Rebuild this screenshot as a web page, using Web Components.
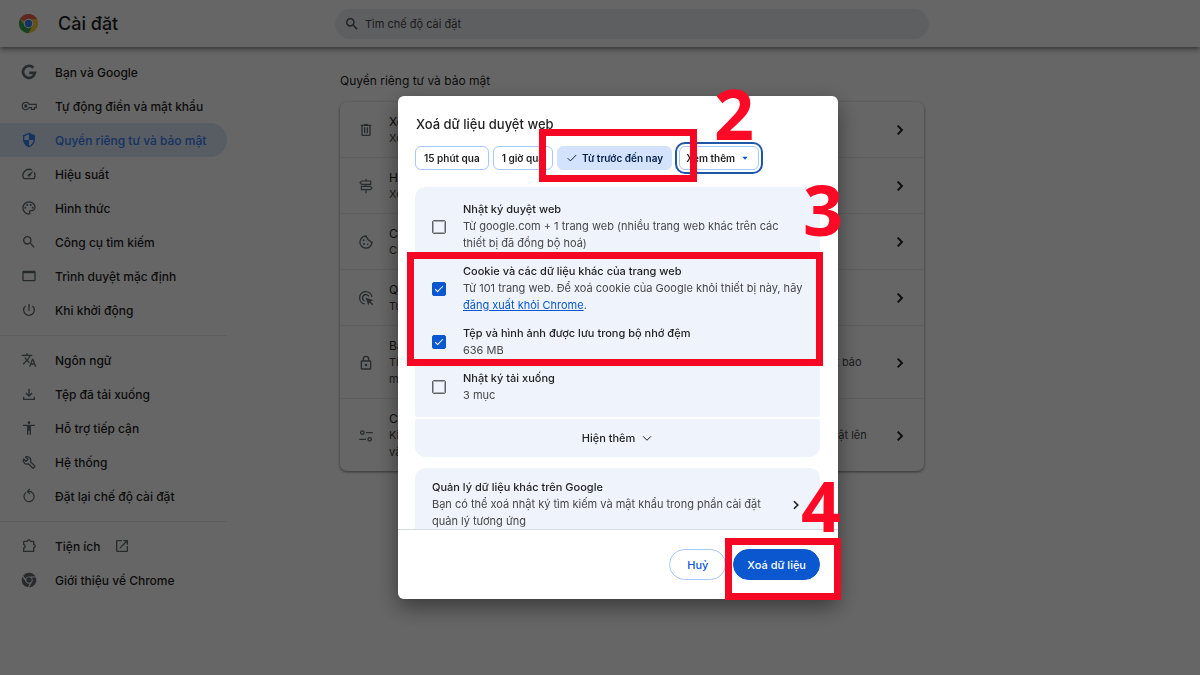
<!DOCTYPE html>
<html lang="vi">
<head>
  <meta charset="utf-8">
  <meta name="viewport" content="width=device-width, initial-scale=1">
  <title>Cài đặt</title>
  <style>
    body {
      margin: 0;
      min-height: 100vh;
      background: #fff;
      color: #1f1f1f;
      font-family: "Inter", "Noto Sans", sans-serif;
      font-size: 12px;
    }
  </style>
</head>
<body>
  <settings-app></settings-app>

  <script>
    // 24x24 icon shapes, drawn in the current colour
    const S = 'fill="none" stroke="currentColor"';
    const ICONS = {
      google: `<path ${S} stroke-width="4" d="M18.6 5.6A9 9 0 1 0 20.9 13.2H12.4"/>`,
      key: `<g ${S} stroke-width="1.8"><path d="M12.4 9.6A5.6 5.6 0 1 0 12.4 14.4H15.6V17.2H20.2V14.4H22.8V9.6Z"/></g><circle cx="7.2" cy="12" r="2.5"/>`,
      shield: `<path d="M12 1 3 5v6c0 5.55 3.84 10.74 9 12 5.16-1.26 9-6.45 9-12V5l-9-4zm0 10.99h7c-.53 4.12-3.28 7.79-7 8.94V12H5V6.3l7-3.11v8.8z"/>`,
      speed: `<path d="m20.38 8.57-1.23 1.85a8 8 0 0 1-.22 7.58H5.07A8 8 0 0 1 15.58 6.85l1.85-1.23A10 10 0 0 0 3.35 19a2 2 0 0 0 1.72 1h13.85a2 2 0 0 0 1.74-1 10 10 0 0 0-.27-10.44zm-9.79 6.84a2 2 0 0 0 2.83 0l5.66-8.49-8.49 5.66a2 2 0 0 0 0 2.83z"/>`,
      palette: `<path d="M12 22C6.49 22 2 17.51 2 12S6.49 2 12 2s10 4.04 10 9c0 3.31-2.69 6-6 6h-1.77c-.28 0-.5.22-.5.5 0 .12.05.23.13.33.41.47.64 1.06.64 1.67A2.5 2.5 0 0 1 12 22zm0-18c-4.41 0-8 3.59-8 8s3.59 8 8 8c.28 0 .5-.22.5-.5a.54.54 0 0 0-.14-.35c-.41-.46-.63-1.05-.63-1.65a2.5 2.5 0 0 1 2.5-2.5H16c2.21 0 4-1.79 4-4 0-3.86-3.59-7-8-7z"/><circle cx="6.5" cy="11.5" r="1.5"/><circle cx="9.5" cy="7.5" r="1.5"/><circle cx="14.5" cy="7.5" r="1.5"/><circle cx="17.5" cy="11.5" r="1.5"/>`,
      search: `<path d="M15.5 14h-.79l-.28-.27A6.47 6.47 0 0 0 16 9.5 6.5 6.5 0 1 0 9.5 16c1.61 0 3.09-.59 4.23-1.57l.27.28v.79l5 4.99L20.49 19l-4.99-5zm-6 0C7.01 14 5 11.99 5 9.5S7.01 5 9.5 5 14 7.01 14 9.5 11.99 14 9.5 14z"/>`,
      browser: `<path d="M20 4H4c-1.1 0-2 .9-2 2v12c0 1.1.9 2 2 2h16c1.1 0 2-.9 2-2V6c0-1.1-.9-2-2-2zm0 14H4V8h16v10z"/>`,
      power: `<path d="M13 3h-2v10h2V3zm4.83 2.17-1.42 1.42A6.92 6.92 0 0 1 19 12c0 3.87-3.13 7-7 7A6.995 6.995 0 0 1 7.58 6.58L6.17 5.17A8.932 8.932 0 0 0 3 12a9 9 0 0 0 18 0c0-2.74-1.23-5.18-3.17-6.83z"/>`,
      translate: `<path d="m12.87 15.07-2.54-2.51.03-.03A17.52 17.52 0 0 0 14.07 6H17V4h-7V2H8v2H1v1.99h11.17C11.5 7.92 10.44 9.75 9 11.35 8.07 10.32 7.3 9.19 6.69 8h-2c.73 1.63 1.73 3.17 2.98 4.56l-5.09 5.02L4 19l5-5 3.11 3.11.76-2.04zM18.5 10h-2L12 22h2l1.12-3h4.75L21 22h2l-4.5-12zm-2.62 7 1.62-4.33L19.12 17h-3.24z"/>`,
      download: `<path ${S} d="M12 4v11M7.4 10.6l4.6 4.6 4.6-4.6M4 16v4h16v-4"/>`,
      accessibility: `<path d="M12 2c1.1 0 2 .9 2 2s-.9 2-2 2-2-.9-2-2 .9-2 2-2zm9 7h-6v13h-2v-6h-2v6H9V9H3V7h18v2z"/>`,
      wrench: `<path ${S} stroke-linejoin="round" d="M9.4 3.9a5.5 5.5 0 0 1 4.9 7.6l6.3 6.3a1 1 0 0 1 0 1.4l-1.8 1.8a1 1 0 0 1-1.4 0l-6.3-6.3a5.5 5.5 0 0 1-7.2-7.3l3.6 3.6 3-3-3.6-3.6a5 5 0 0 1 2.5-.5z"/>`,
      reset: `<path ${S} stroke-width="1.8" d="M11 5.2h1A7.6 7.6 0 1 1 7.5 6.7M13.2 1.5 9.6 5.2l3.6 3.6"/>`,
      extension: `<path ${S} stroke-linejoin="round" d="M5 5h4.5a2.3 2.3 0 0 1 4.6 0H19v5a2.3 2.3 0 0 1 0 4.6V20H4v-4.6a3 3 0 0 0 0-5.8V6a1 1 0 0 1 1-1z"/>`,
      chromeMono: `<circle cx="12" cy="12" r="4"/><path fill-rule="evenodd" d="M12 1a11 11 0 0 1 9.6 5.6H12A5.5 5.5 0 0 0 6.8 10.3L3.2 5.5A11 11 0 0 1 12 1zM2.2 7.2A11 11 0 0 0 10.3 22.9l3.1-5.6A5.5 5.5 0 0 1 7.1 14.5zM22.3 8.2A11 11 0 0 1 12 23l4.6-8a5.5 5.5 0 0 0-.8-6.8z"/>`,
      external: `<path d="M19 19H5V5h7V3H5a2 2 0 0 0-2 2v14a2 2 0 0 0 2 2h14c1.1 0 2-.9 2-2v-7h-2v7zM14 3v2h3.59l-9.83 9.83 1.41 1.41L19 6.41V10h2V3h-7z"/>`,
      trash: `<path d="M15 4V3H9v1H4v2h1v13c0 1.1.9 2 2 2h10c1.1 0 2-.9 2-2V6h1V4h-5zm2 15H7V6h10v13zM9 8h2v9H9zm4 0h2v9h-2z"/>`,
      signpost: `<path ${S} stroke-width="1.8" d="M12 1.5v3M12 9.5v3M12 17.5V23M5.5 4.5H19v5H5.5L3 7zM18.5 12.5H5v5h13.5L21 15z"/>`,
      cookie: `<path ${S} d="M12.2 3a9.1 9.1 0 1 0 8.8 9.3c-2 .2-3.2-1-3.2-2.7-2.4.2-3.7-1.2-3.3-3.3C12.8 6 12 4.8 12.2 3z"/><circle cx="8.5" cy="9.5" r="1.5"/><circle cx="9" cy="15" r="1.5"/><circle cx="14.5" cy="15.5" r="1.2"/>`,
      adsClick: `<path ${S} d="M10 20.8A9.3 9.3 0 1 1 20.9 10.2M9.5 16.2a5 5 0 1 1 6.8-6.7"/><path d="m11.5 11.5 11.5 4-4.3 1.8 4.2 4.2-1.5 1.5-4.2-4.2-1.7 4.2z"/>`,
      lock: `<path d="M18 8h-1V6A5 5 0 0 0 7 6v2H6a2 2 0 0 0-2 2v10c0 1.1.9 2 2 2h12a2 2 0 0 0 2-2V10a2 2 0 0 0-2-2zM9 6a3 3 0 0 1 6 0v2H9V6zm9 14H6V10h12v10zm-6-3a2 2 0 1 0 0-4 2 2 0 0 0 0 4z"/>`,
      tune: `<g ${S}><circle cx="6.5" cy="7" r="2.6"/><path d="M12 7h10M2 17h10"/><circle cx="17.5" cy="17" r="2.6"/></g>`,
      chevronRight: `<path ${S} stroke-width="2.8" d="m8.5 5.5 6.5 6.5-6.5 6.5"/>`,
      chevronDown: `<path ${S} d="m4 8.5 8 8 8-8"/>`,
      check: `<path ${S} d="m3.5 12.5 5.3 5.3L20.5 6"/>`,
      arrowDrop: `<path d="m4 8 8 9 8-9z"/>`,
      chrome: `
        <circle cx="12" cy="12" r="11" fill="#fbc73c"/>
        <path fill="#f06050" d="M12 12 2.5 6.5a11 11 0 0 1 19 0V7H12z"/>
        <path fill="#34a853" d="M2.5 6.5A11 11 0 0 0 11.9 23L16.4 14.5 12 12l-4.4 2.5z"/>
        <circle cx="12" cy="12" r="5.4" fill="#fff"/>
        <circle cx="12" cy="12" r="4.2" fill="#3580f0"/>`
    };

    class UiIcon extends HTMLElement {
      constructor() {
        super();
        this.attachShadow({ mode: "open" });
      }

      connectedCallback() {
        this.shadowRoot.innerHTML = `
          <style>
            :host {
              display: block;
              flex: none;
              width: var(--icon-size, 16px);
              height: var(--icon-size, 16px);
            }
            svg { display: block; width: 100%; height: 100%; fill: currentColor; stroke-width: 2; }
          </style>
          <svg viewBox="0 0 24 24" aria-hidden="true">${ICONS[this.getAttribute("name")] || ""}</svg>
        `;
      }
    }

    class SettingsHeader extends HTMLElement {
      constructor() {
        super();
        this.attachShadow({ mode: "open" });
        this.shadowRoot.innerHTML = `
          <style>
            :host {
              display: grid;
              grid-template-columns: 335px minmax(0, 594px);
              align-items: center;
              height: 47px;
              background: #fff;
              box-shadow: 0 2px 5px rgba(0, 0, 0, 0.5);
            }
            .brand {
              display: flex;
              align-items: center;
              gap: 19px;
              padding-left: 18px;
            }
            .brand ui-icon { --icon-size: 21px; }
            h1 { margin: 0; font-size: 18px; line-height: 24px; font-weight: 500; }
            label {
              display: flex;
              align-items: center;
              gap: 5px;
              height: 30px;
              padding: 0 9px;
              border-radius: 15px;
              background: #ebeef2;
              color: #474747;
            }
            input {
              flex: 1;
              min-width: 0;
              border: 0;
              padding: 0;
              outline: 0;
              background: none;
              font: inherit;
              font-size: 11px;
              color: inherit;
            }
            input::placeholder { color: #474747; opacity: 1; }
          </style>
          <div class="brand">
            <ui-icon name="chrome"></ui-icon>
            <h1>Cài đặt</h1>
          </div>
          <label>
            <ui-icon name="search"></ui-icon>
            <input type="text" placeholder="Tìm chế độ cài đặt" aria-label="Tìm chế độ cài đặt">
          </label>
        `;
      }
    }

    class NavItem extends HTMLElement {
      constructor() {
        super();
        this.attachShadow({ mode: "open" });
      }

      connectedCallback() {
        this.shadowRoot.innerHTML = `
          <style>
            :host { display: block; }
            a {
              display: flex;
              align-items: center;
              height: 34px;
              padding-left: 21px;
              border-radius: 0 17px 17px 0;
              color: #1f1f1f;
              font-weight: 500;
              text-decoration: none;
              white-space: nowrap;
            }
            .lead { color: #666a6d; margin-right: 18px; }
            .out { color: #666a6d; margin-left: 13px; }
            :host([active]) a { background: #dbe5f8; }
            :host([active]) a, :host([active]) .lead { color: #3580f0; }
          </style>
          <a href="#">
            <ui-icon class="lead" name="${this.getAttribute("icon")}"></ui-icon>
            <slot></slot>
            ${this.hasAttribute("external") ? '<ui-icon class="out" name="external"></ui-icon>' : ""}
          </a>
        `;
      }
    }

    class SettingsNav extends HTMLElement {
      constructor() {
        super();
        this.attachShadow({ mode: "open" });
        this.shadowRoot.innerHTML = `
          <style>
            :host { display: block; padding: 8px 1px 0 0; }
            hr { height: 1px; margin: 8px 0 7px; border: 0; background: #e9e9e9; }
          </style>
          <nav>
            <nav-item icon="google">Bạn và Google</nav-item>
            <nav-item icon="key">Tự động điền và mật khẩu</nav-item>
            <nav-item icon="shield" active>Quyền riêng tư và bảo mật</nav-item>
            <nav-item icon="speed">Hiệu suất</nav-item>
            <nav-item icon="palette">Hình thức</nav-item>
            <nav-item icon="search">Công cụ tìm kiếm</nav-item>
            <nav-item icon="browser">Trình duyệt mặc định</nav-item>
            <nav-item icon="power">Khi khởi động</nav-item>
            <hr>
            <nav-item icon="translate">Ngôn ngữ</nav-item>
            <nav-item icon="download">Tệp đã tải xuống</nav-item>
            <nav-item icon="accessibility">Hỗ trợ tiếp cận</nav-item>
            <nav-item icon="wrench">Hệ thống</nav-item>
            <nav-item icon="reset">Đặt lại chế độ cài đặt</nav-item>
            <hr>
            <nav-item icon="extension" external>Tiện ích</nav-item>
            <nav-item icon="chromeMono">Giới thiệu về Chrome</nav-item>
          </nav>
        `;
      }
    }

    class SettingsRow extends HTMLElement {
      constructor() {
        super();
        this.attachShadow({ mode: "open" });
      }

      connectedCallback() {
        this.shadowRoot.innerHTML = `
          <style>
            :host { display: block; }
            :host(:not(:first-child)) { border-top: 1px solid #ebebeb; }
            a {
              display: flex;
              align-items: center;
              padding: 11px 16px 10px 18px;
              color: inherit;
              text-decoration: none;
              line-height: 17px;
            }
            .lead { color: #666a6d; margin-right: 15px; }
            .text { flex: 1; min-width: 0; padding-right: 18px; }
            .sub { color: #474747; font-size: 11px; }
          </style>
          <a href="#">
            <ui-icon class="lead" name="${this.getAttribute("icon")}"></ui-icon>
            <div class="text">
              <div>${this.getAttribute("label")}</div>
              <div class="sub"><slot></slot></div>
            </div>
            <ui-icon name="chevronRight"></ui-icon>
          </a>
        `;
      }
    }

    class SettingsPage extends HTMLElement {
      constructor() {
        super();
        this.attachShadow({ mode: "open" });
        this.shadowRoot.innerHTML = `
          <style>
            :host { display: block; padding: 25px 0; }
            h2 { margin: 0 0 12px; font-size: 12px; line-height: 18px; font-weight: 400; }
            .card {
              border-radius: 7px;
              background: #fff;
              box-shadow: 0 1px 3px rgba(0, 0, 0, 0.5);
            }
          </style>
          <h2>Quyền riêng tư và bảo mật</h2>
          <div class="card">
            <settings-row icon="trash" label="Xoá dữ liệu duyệt web">Xoá nhật ký duyệt web, cookie, bộ nhớ đệm và các mục khác</settings-row>
            <settings-row icon="signpost" label="Hướng dẫn về quyền riêng tư">Xem lại các chế độ kiểm soát quan trọng về quyền riêng tư và bảo mật</settings-row>
            <settings-row icon="cookie" label="Cookie của bên thứ ba">Chặn cookie của bên thứ ba ở chế độ Ẩn danh</settings-row>
            <settings-row icon="adsClick" label="Quyền riêng tư trong quảng cáo">Tuỳ chỉnh thông tin mà trang web dùng để hiển thị quảng cáo</settings-row>
            <settings-row icon="lock" label="Bảo mật">Tính năng Duyệt web an toàn (bảo vệ khỏi các trang web nguy hiểm) và chế độ cài đặt bảo mật khác</settings-row>
            <settings-row icon="tune" label="Cài đặt trang web">Kiểm soát thông tin mà các trang web có thể dùng và hiển thị (vị trí, máy ảnh, cửa sổ bật lên và nhiều thông tin khác)</settings-row>
          </div>
        `;
      }
    }

    class TimeChip extends HTMLElement {
      constructor() {
        super();
        this.attachShadow({ mode: "open" });
        this.shadowRoot.innerHTML = `
          <style>
            :host { display: block; }
            button {
              display: flex;
              align-items: center;
              gap: 4px;
              height: 24px;
              padding: 0 8px;
              border: 1px solid #a8c7fa;
              border-radius: 6px;
              background: #fff;
              color: #1f1f1f;
              font: inherit;
              font-size: 10px;
              font-weight: 600;
              white-space: nowrap;
            }
            ui-icon { display: none; --icon-size: 12px; }
            :host([selected]) button { background: #d3e3fd; border-color: #d3e3fd; color: #041e49; }
            :host([selected]) ui-icon { display: block; }
          </style>
          <button type="button"><ui-icon name="check"></ui-icon><slot></slot></button>
        `;
      }
    }

    class MoreChip extends HTMLElement {
      constructor() {
        super();
        this.attachShadow({ mode: "open" });
        this.shadowRoot.innerHTML = `
          <style>
            :host {
              display: grid;
              align-items: center;
              border: 1px solid #a8c7fa;
              border-radius: 6px;
              outline: 2px solid #1f57a8;
              outline-offset: 2px;
            }
            select, ui-icon { grid-area: 1 / 1; }
            select {
              appearance: none;
              height: 22px;
              margin: 0;
              padding: 0 23px 0 6px;
              border: 0;
              outline: 0;
              background: none;
              color: #1f1f1f;
              font: inherit;
              font-size: 10px;
              font-weight: 600;
            }
            ui-icon {
              --icon-size: 8px;
              justify-self: end;
              margin-right: 9px;
              color: #0b57d0;
              pointer-events: none;
            }
          </style>
          <select aria-label="Xem thêm"><option>Xem thêm</option></select>
          <ui-icon name="arrowDrop"></ui-icon>
        `;
      }
    }

    class DataOption extends HTMLElement {
      constructor() {
        super();
        this.attachShadow({ mode: "open" });
      }

      connectedCallback() {
        this.shadowRoot.innerHTML = `
          <style>
            :host { display: flex; align-items: center; gap: 17px; line-height: 17px; }
            input {
              appearance: none;
              flex: none;
              display: grid;
              place-items: center;
              width: 14px;
              height: 14px;
              margin: 0;
              border: 1px solid #5f6368;
              outline: 1px solid #a9abb0;
              outline-offset: -2px;
              border-radius: 2px;
            }
            input:checked { background: #0b57d0; border-color: #0b57d0; outline: 0; }
            input:checked::after {
              content: "";
              width: 7px;
              height: 3px;
              border: solid #fff;
              border-width: 0 0 1px 1px;
              transform: translateY(-1px) rotate(-45deg);
            }
            label { display: block; font-weight: 500; font-size: 11px; }
            .sub { color: #474747; font-size: 11px; }
            ::slotted(a) { color: #0b57d0; }
          </style>
          <input id="box" type="checkbox" ${this.hasAttribute("checked") ? "checked" : ""}>
          <div>
            <label for="box">${this.getAttribute("label")}</label>
            <div class="sub"><slot></slot></div>
          </div>
        `;
      }
    }

    // red frame laid over one step of the guide
    class StepFrame extends HTMLElement {
      constructor() {
        super();
        this.attachShadow({ mode: "open" });
        this.shadowRoot.innerHTML = `
          <style>
            :host {
              position: absolute;
              box-sizing: border-box;
              border: 7px solid #f50823;
              pointer-events: none;
            }
          </style>
        `;
      }
    }

    class StepNumber extends HTMLElement {
      constructor() {
        super();
        this.attachShadow({ mode: "open" });
        this.shadowRoot.innerHTML = `
          <style>
            :host {
              position: absolute;
              color: #ff0a26;
              font: 700 70px/70px "Open Sans", sans-serif;
              pointer-events: none;
            }
          </style>
          <slot></slot>
        `;
      }
    }

    class ClearDataDialog extends HTMLElement {
      constructor() {
        super();
        this.attachShadow({ mode: "open" });
        this.shadowRoot.innerHTML = `
          <style>
            :host {
              position: fixed;
              inset: 0;
              display: flex;
              align-items: center;
              justify-content: center;
              padding: 20px 0 0 36px;
              background: rgba(0, 0, 0, 0.6);
            }
            .dialog {
              position: relative;
              width: 440px;
              border-radius: 6px;
              background: #fff;
              box-shadow: 0 8px 22px rgba(0, 0, 0, 0.45);
            }
            h2 { margin: 0; padding: 18px 18px 0; font-size: 13px; line-height: 20px; font-weight: 500; }
            .chips { display: flex; gap: 4px; padding: 12px 17px 17px; }
            more-chip { margin-left: 3px; }
            .body { max-height: 342px; padding: 0 18px 0 17px; overflow: hidden; }
            .options {
              display: flex;
              flex-direction: column;
              gap: 11px;
              padding: 14px 16px 13px 17px;
              border-radius: 10px 10px 3px 3px;
              background: #eef3fc;
            }
            .more {
              display: flex;
              align-items: center;
              justify-content: center;
              gap: 6px;
              width: 100%;
              height: 38px;
              margin: 2px 0 11px;
              border: 0;
              border-radius: 3px 3px 10px 10px;
              background: #eef3fc;
              color: #1f1f1f;
              font: inherit;
              font-size: 11px;
              font-weight: 500;
            }
            .more ui-icon { --icon-size: 12px; }
            .other {
              display: flex;
              align-items: center;
              padding: 11px 17px;
              border-radius: 10px;
              background: #eef3fc;
              color: #474747;
              font-size: 11px;
              line-height: 17px;
              text-decoration: none;
            }
            .other div { flex: 1; padding-right: 24px; }
            .other strong { display: block; color: #1f1f1f; font-weight: 500; }
            .other ui-icon { color: #1f1f1f; --icon-size: 14px; }
            footer {
              display: flex;
              justify-content: flex-end;
              gap: 7px;
              padding: 19px 18px;
              border-top: 1px solid #d5d9e0;
            }
            footer button {
              height: 31px;
              padding: 0 13px;
              border: 1px solid #0b57d0;
              border-radius: 16px;
              background: #0b57d0;
              color: #fff;
              font: inherit;
              font-size: 11px;
              font-weight: 500;
            }
            footer .cancel { padding: 0 17px; border-color: #a8c7fa; background: #fff; color: #0b57d0; }
            .time { left: 141px; top: 33px; width: 158px; height: 53px; }
            .data { left: 9px; top: 156px; width: 416px; height: 114px; }
            .submit { left: 327px; top: 442px; width: 116px; height: 62px; }
            .two { left: 316px; top: -18px; }
            .three { left: 405px; top: 78px; }
            .four { left: 403px; top: 374px; }
          </style>
          <div class="dialog" role="dialog" aria-labelledby="title">
            <h2 id="title">Xoá dữ liệu duyệt web</h2>
            <div class="chips">
              <time-chip>15 phút qua</time-chip>
              <time-chip>1 giờ qua</time-chip>
              <time-chip selected>Từ trước đến nay</time-chip>
              <more-chip></more-chip>
            </div>
            <div class="body">
              <div class="options">
                <data-option label="Nhật ký duyệt web">Từ google.com + 1 trang web (nhiều trang web khác trên các thiết bị đã đồng bộ hoá)</data-option>
                <data-option checked label="Cookie và các dữ liệu khác của trang web">Từ 101 trang web. Để xoá cookie của Google khỏi thiết bị này, hãy <a href="#">đăng xuất khỏi Chrome</a>.</data-option>
                <data-option checked label="Tệp và hình ảnh được lưu trong bộ nhớ đệm">636 MB</data-option>
                <data-option label="Nhật ký tải xuống">3 mục</data-option>
              </div>
              <button class="more" type="button">Hiện thêm <ui-icon name="chevronDown"></ui-icon></button>
              <a class="other" href="#">
                <div>
                  <strong>Quản lý dữ liệu khác trên Google</strong>
                  Bạn có thể xoá nhật ký tìm kiếm và mật khẩu trong phần cài đặt quản lý tương ứng
                </div>
                <ui-icon name="chevronRight"></ui-icon>
              </a>
            </div>
            <footer>
              <button class="cancel" type="button">Huỷ</button>
              <button type="button">Xoá dữ liệu</button>
            </footer>
            <step-frame class="time"></step-frame>
            <step-frame class="data"></step-frame>
            <step-frame class="submit"></step-frame>
            <step-number class="two">2</step-number>
            <step-number class="three">3</step-number>
            <step-number class="four">4</step-number>
          </div>
        `;
      }
    }

    class SettingsApp extends HTMLElement {
      constructor() {
        super();
        this.attachShadow({ mode: "open" });
        this.shadowRoot.innerHTML = `
          <style>
            :host { display: block; }
            .layout {
              display: grid;
              grid-template-columns: 228px minmax(0, 584px);
              column-gap: 112px;
            }
          </style>
          <settings-header></settings-header>
          <div class="layout">
            <settings-nav></settings-nav>
            <settings-page></settings-page>
          </div>
          <clear-data-dialog></clear-data-dialog>
        `;
      }
    }

    customElements.define("ui-icon", UiIcon);
    customElements.define("settings-header", SettingsHeader);
    customElements.define("nav-item", NavItem);
    customElements.define("settings-nav", SettingsNav);
    customElements.define("settings-row", SettingsRow);
    customElements.define("settings-page", SettingsPage);
    customElements.define("time-chip", TimeChip);
    customElements.define("more-chip", MoreChip);
    customElements.define("data-option", DataOption);
    customElements.define("step-frame", StepFrame);
    customElements.define("step-number", StepNumber);
    customElements.define("clear-data-dialog", ClearDataDialog);
    customElements.define("settings-app", SettingsApp);
  </script>
</body>
</html>
